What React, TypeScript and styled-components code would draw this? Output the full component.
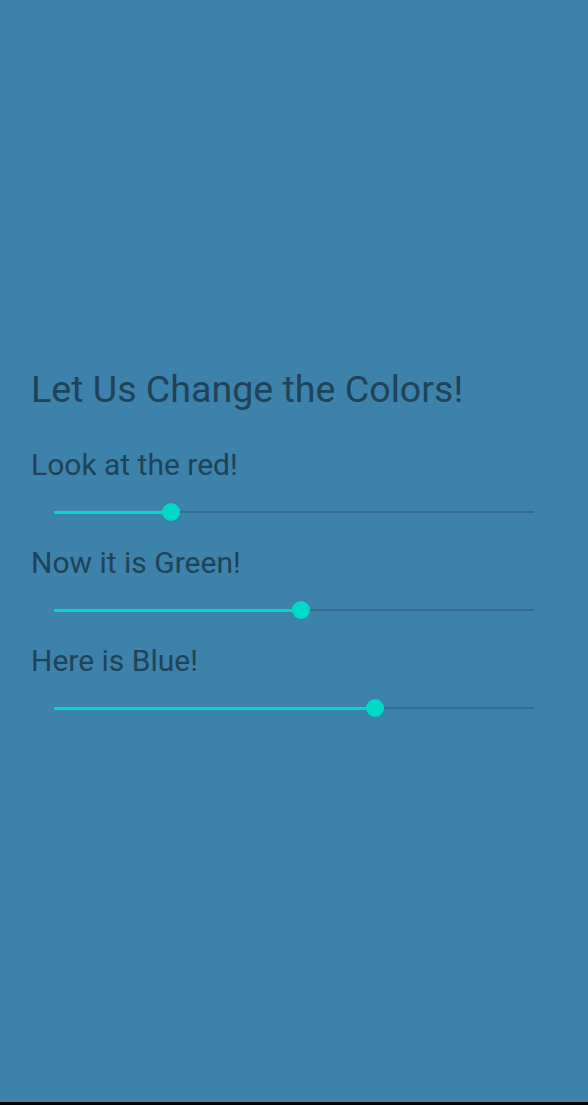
import React, { useState } from "react";
import styled, { createGlobalStyle } from "styled-components";

const Global = createGlobalStyle`
  html, body { margin: 0; padding: 0; background: #3d82aa; }
  body { font-family: Roboto, "Noto Sans", sans-serif; }
`;

const Screen = styled.div`
  width: 588px;
  height: 1105px;
  display: flex;
  flex-direction: column;
  background: #3d82aa;
`;

const Main = styled.main`
  flex: 1;
  display: flex;
  flex-direction: column;
  padding: 367px 31px 0 31px;
`;

const Title = styled.h1`
  margin: 0 0 35px 0;
  font-family: Roboto, sans-serif;
  font-weight: 400;
  font-size: 37.6px;
  line-height: 45px;
  color: #1f4358;
`;

const Label = styled.div`
  font-family: Roboto, sans-serif;
  font-size: 30px;
  line-height: 35px;
  color: #1f4358;
`;

const Group = styled.section`
  display: flex;
  flex-direction: column;
  margin-bottom: 15px;
`;

const SliderWrap = styled.div`
  position: relative;
  height: 36px;
  margin: 12px 23px 0 23px;
`;

const Track = styled.div`
  position: absolute;
  left: 0;
  right: 0;
  top: 17px;
  height: 2px;
  background: #346c8f;
`;

const Fill = styled.div`
  position: absolute;
  left: 0;
  top: 17px;
  height: 3px;
  background: #00d9c8;
`;

const Thumb = styled.div`
  position: absolute;
  top: 9px;
  width: 18px;
  height: 18px;
  margin-left: -9px;
  border-radius: 50%;
  background: #00d9c8;
`;

const BottomBar = styled.div`
  height: 3px;
  background: #000;
`;

function Slider({ value }: { value: number }) {
  const pct = `${value * 100}%`;
  return (
    <SliderWrap>
      <Track />
      <Fill style={{ width: pct }} />
      <Thumb style={{ left: pct }} />
    </SliderWrap>
  );
}

export default function App() {
  const [vals] = useState([0.244, 0.515, 0.669]);
  const labels = ["Look at the red!", "Now it is Green!", "Here is Blue!"];
  return (
    <>
      <Global />
      <Screen>
        <Main>
          <Title>Let Us Change the Colors!</Title>
          {labels.map((l, i) => (
            <Group key={l}>
              <Label>{l}</Label>
              <Slider value={vals[i]} />
            </Group>
          ))}
        </Main>
        <BottomBar />
      </Screen>
    </>
  );
}
